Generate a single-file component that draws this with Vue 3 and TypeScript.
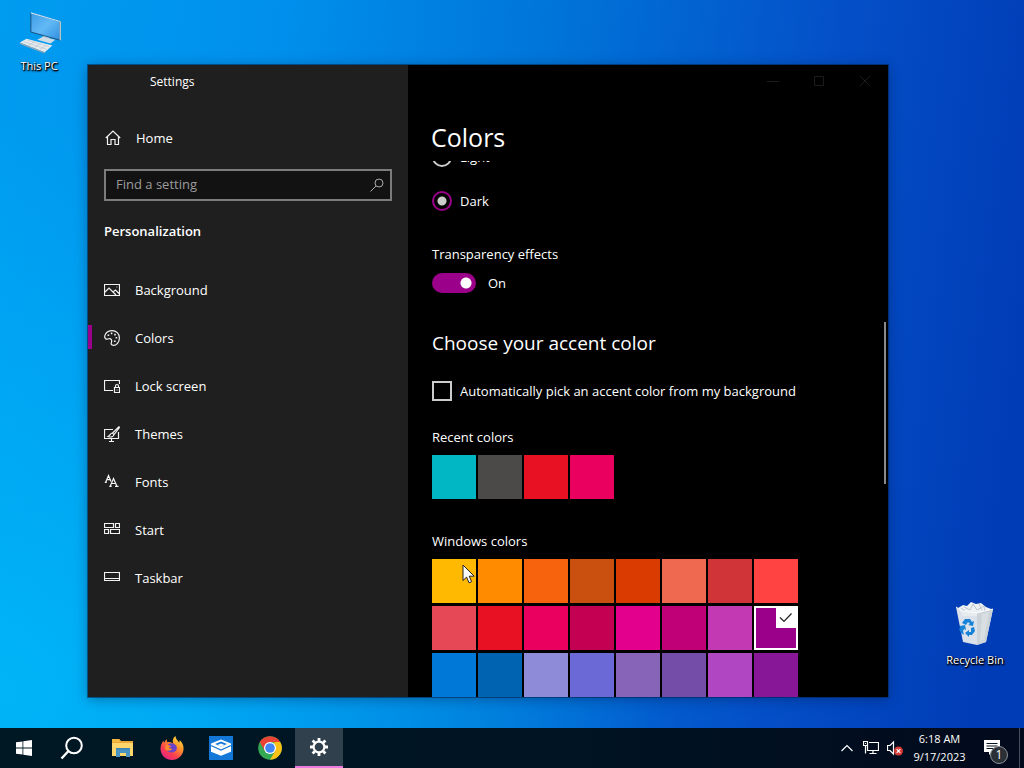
<script setup lang="ts">
import { ref } from 'vue'

interface NavItem { label: string; icon: string; dots?: string }

const navItems: NavItem[] = [
  { label: 'Background', icon: 'M.5 2.500h15v11H.5zM1 10l4-4 7 7M9.500 9.500 11.500 8l4 4M12.500 5h.8' },
  {
    label: 'Colors',
    icon: 'M1.600 8.700C-.5 7 1.500.6 8 .6c4.300 0 7.400 3 7.400 7.300 0 4.500-3 7.500-5.900 7.500-2.600 0-2.600-1.700-2-3.400C8.200 10 6.800 8 5 8.700 3.800 9.200 2.800 9.700 1.600 8.700z',
    dots: 'M3.600 5.200h1.600M6.800 3.400h1.600M10.200 4.600h1.600M11.600 7.800h1.600M10 11.200h1.600',
  },
  { label: 'Lock screen', icon: 'M9 12.500H.5v-10h15V6M4 12.500h5M10.500 9.500h5v5h-5zM11.500 9.500V8a1.500 1.500 0 0 1 3 0v1.500M12.500 12h1' },
  { label: 'Themes', icon: 'M9 3.500H.5v9h14V6M5 15.500h5M7.500 12.500v3M15 .8 8.500 7l1.500 1.500L15.500 1.500zM8.500 7C6 7 6.500 9.500 4 10.500c2.500 1 5.500.5 6-2' },
  { label: 'Fonts', icon: 'M1.800 8 4.500 1.500 7 7.500M2.800 5.700H6M.8 8.300h2M6.300 12 9.500 4.500 12.800 12M7.500 9.500h4.200M5.300 12.400h2.400M11 12.400h3.500' },
  { label: 'Start', icon: 'M.5 1.500h9v4h-9zM11.500 1.500h4v4h-4zM.5 7.500h4v4h-4zM6.500 7.500h9v4h-9z' },
  { label: 'Taskbar', icon: 'M.5 2.500h15v8H.5zM.5 8.500h15' },
]

const recentColors = ['#00b7c3', '#4c4a48', '#e81123', '#ea005e']
const windowsColors = [
  '#ffb900', '#ff8c00', '#f7630c', '#ca5010', '#da3b01', '#ef6950', '#d13438', '#ff4343',
  '#e74856', '#e81123', '#ea005e', '#c30052', '#e3008c', '#bf0077', '#c239b3', '#9a0089',
  '#0078d7', '#0063b1', '#8e8cd8', '#6b69d6', '#8764b8', '#744da9', '#b146c2', '#881798',
]

const activeNav = ref('Colors')
const mode = ref('dark')
const transparency = ref(true)
const autoPick = ref(false)
const accent = ref('#9a0089')
const query = ref('')
</script>

<template>
  <div class="screen">
    <main class="desktop">
      <button class="shortcut pc">
        <svg width="48" height="44" viewBox="0 0 48 46" aria-hidden="true">
          <defs>
            <linearGradient id="glass" x1="0" y1="0" x2="1" y2="1">
              <stop offset="0" stop-color="#3d9be6" /><stop offset=".5" stop-color="#62b9f5" /><stop offset="1" stop-color="#2f8fe0" />
            </linearGradient>
          </defs>
          <path d="M15.500 2 46 11v19.500L15.500 22z" fill="url(#glass)" stroke="#1b4f7c" stroke-width="1" />
          <path d="M15.500 2 46 11" stroke="#bfe2f8" stroke-width="1.200" />
          <path d="M46.200 11v19.500" stroke="#e0dccb" stroke-width="1.200" />
          <path d="m28 26 7 2v3l-7-2z" fill="#aebcc6" />
          <path d="m22 30 6-3 13 3-5 4z" fill="#cfdbe5" />
          <path d="M4 33 11 29l27 7-8 7z" fill="#e6ebef" />
          <path d="m4 33 26 10v1.500L4 34.500z" fill="#98a8b5" />
          <path d="m8 32 24 8M12 30.500l23 7M13 36l7-4M19 38l7-4M25 40l7-4" stroke="#b4bec7" stroke-width=".6" />
        </svg>
        <span>This PC</span>
      </button>

      <button class="shortcut bin">
        <svg width="48" height="48" viewBox="0 0 48 48" aria-hidden="true">
          <path d="m7 9 5-3 4 1 4-4 5 2 5-1 5 4 5 2-2 7H12z" fill="#edf1f4" />
          <path d="m13 8 6 3 3-6 4 6 7-4 1 6M10 9l5 4M28 5l3 6" stroke="#bcc5ce" fill="none" />
          <path d="m5 8 6 4 15 2 16-4-7 33-9 3-14-3z" fill="#e6eaed" opacity=".95" />
          <path d="m26 14 16-4-7 33-9 3z" fill="#cbd2d8" />
          <path d="m31 15 7-2-5 28-4 1z" fill="#d9dee2" />
          <path d="m5 8 6 4 15 2 16-4" stroke="#f8fafc" fill="none" />
          <g fill="#1683d8">
            <path d="m11 24 3-4h5l2 3 2-1-1 5-5-1 2-1-2-2-2 3z" />
            <path d="m20 29 3-1 1 4-3 4h-3v2l-4-4 4-3v2h2z" />
            <path d="m9 27 5-1 1 5-2-1-1 2 1 4-3-2-2-4 1-1z" />
          </g>
        </svg>
        <span>Recycle Bin</span>
      </button>

      <section class="window" aria-label="Settings">
        <aside class="side">
          <header class="title">Settings</header>
          <button class="nav home">
            <svg viewBox="0 0 16 16" aria-hidden="true"><path d="M.8 8 8 1l7.200 7M2.500 6.500v8H6V9.500h4v5h3.500v-8" /></svg>
            Home
          </button>
          <div class="search">
            <input v-model="query" type="text" placeholder="Find a setting" aria-label="Find a setting" />
            <svg viewBox="0 0 16 16" aria-hidden="true"><circle cx="10" cy="6" r="4" /><path d="m7 9-5.500 5.500" /></svg>
          </div>
          <h2>Personalization</h2>
          <nav>
            <button v-for="item in navItems" :key="item.label" class="nav" :class="{ active: item.label === activeNav }" @click="activeNav = item.label">
              <svg viewBox="0 0 16 16" aria-hidden="true">
                <path :d="item.icon" />
                <path v-if="item.dots" class="dots" :d="item.dots" />
              </svg>
              {{ item.label }}
            </button>
          </nav>
        </aside>

        <div class="content">
          <div class="caption">
            <button aria-label="Minimize"><svg viewBox="0 0 12 12"><path d="M0 6.500h12" /></svg></button>
            <button aria-label="Maximize"><svg viewBox="0 0 12 12"><path d="M1.500 1.500h9v9h-9z" /></svg></button>
            <button aria-label="Close"><svg viewBox="0 0 12 12"><path d="m1 1 10 10M11 1 1 11" /></svg></button>
          </div>
          <h1>Colors</h1>
          <div class="scroller">
            <div class="page">
              <label class="option"><input v-model="mode" type="radio" name="mode" value="light" />Light</label>
              <label class="option dark"><input v-model="mode" type="radio" name="mode" value="dark" />Dark</label>
              <label class="caption-text" for="transparency">Transparency effects</label>
              <div class="toggle">
                <input id="transparency" v-model="transparency" type="checkbox" role="switch" />
                <span>{{ transparency ? 'On' : 'Off' }}</span>
              </div>
              <h3>Choose your accent color</h3>
              <label class="option auto"><input v-model="autoPick" type="checkbox" />Automatically pick an accent color from my background</label>
              <h4>Recent colors</h4>
              <div class="swatches recent">
                <button v-for="c in recentColors" :key="c" :style="{ background: c }" :aria-label="c" @click="accent = c"></button>
              </div>
              <h4>Windows colors</h4>
              <div class="swatches">
                <button v-for="c in windowsColors" :key="c" :class="{ picked: c === accent }" :style="{ background: c }" :aria-label="c" :aria-pressed="c === accent" @click="accent = c">
                  <svg v-if="c === accent" viewBox="0 0 20 20" aria-hidden="true"><path d="m4 9.500 4 4 7.500-8" /></svg>
                </button>
              </div>
            </div>
          </div>
          <div class="thumb"></div>
        </div>
      </section>

      <svg class="pointer" width="13" height="20" viewBox="0 0 13 20" aria-hidden="true">
        <path d="M1 1v15.500l3.600-3.400L7 18.800l2.600-1.100-2.400-5.500h5z" fill="#fff" stroke="#222" />
      </svg>
    </main>

    <footer class="taskbar">
      <div class="apps">
        <div class="system">
          <button aria-label="Start">
            <svg width="16" height="16" viewBox="0 0 16 16"><path d="M0 2.300 6.500 1.400v6.200H0zM7.300 1.300 16 0v7.600H7.300zM0 8.400h6.500v6.200L0 13.700zM7.300 8.400H16V16l-8.700-1.300z" fill="#fff" /></svg>
          </button>
          <button aria-label="Search">
            <svg width="24" height="24" viewBox="0 0 24 24" fill="none" stroke="#fff" stroke-width="2"><circle cx="14" cy="9.500" r="7.800" /><path d="m8.500 15-7 7.500" stroke-width="2.400" /></svg>
          </button>
        </div>
        <div class="pinned">
          <button aria-label="File Explorer">
            <svg width="24" height="24" viewBox="0 0 24 24">
              <path d="M1 3h7l2 2h12v14H1z" fill="#e9a93a" /><path d="M1 7h21v13H1z" fill="#ffd66c" />
              <path d="M1 3h7l1.500 1.500L8 6H1z" fill="#f5b942" />
              <path d="M5 12h14v9h-4v-4H9v4H5z" fill="#4a94c4" /><path d="M5 12h14v1.500H5z" fill="#3a84b5" />
            </svg>
          </button>
          <button aria-label="Firefox">
            <svg width="24" height="24" viewBox="0 0 24 24">
              <defs><linearGradient id="fox" x1=".9" y1="0" x2=".2" y2="1"><stop offset="0" stop-color="#fff14a" /><stop offset=".35" stop-color="#ff9a2a" /><stop offset=".7" stop-color="#fa3d50" /><stop offset="1" stop-color="#e3218c" /></linearGradient></defs>
              <path d="M15.500 0c.2 3.500 3.200 4.800 3.600 7l.6-2.800C22 6 24 10 23.500 13.500 23 19.500 18 24 12 24S.7 19.500.5 13C.4 9.500 2 6.500 3.500 4.500L4 7l2.500-4 .7 3.200C10 5.500 12 6.500 13.500 8 12 5 13 1.500 15.500 0z" fill="url(#fox)" />
              <path d="M8 8.500c2.500-2 6.500-1.500 8.300 1.500 1.700 3.500-.8 6.500-4.700 6.500-2.500 0-4.500-1-5.300-3 2 1.300 4.300 1 6-.5-1.500-.2-2.800-.7-3.600-1.500 1-.4 2.100-1 2.600-1.700-1.200-.4-2.600.3-3.300-1.300z" fill="#6a43c9" />
              <path d="M7 8.200c-1.500 1-2.200 3-1.700 5.200 2 1.800 4.700 1.600 6.700-.2l-3.500-1.500 2.600-1.700c-1.500-.2-3-.2-4.100-1.800z" fill="#ff8a2c" />
            </svg>
          </button>
          <button aria-label="Package">
            <svg width="24" height="24" viewBox="0 0 24 24">
              <path d="M0 0h24v24H0z" fill="#1378d8" /><path d="m2 7.500 10-4 10 4v8.300l-10 4-10-4z" fill="#fff" />
              <path d="m2 9.500 10 4.500 10-4.500" stroke="#1378d8" fill="none" stroke-width="1.200" />
              <path d="m6 8 6-2.400L18 8l-6 2.500z" fill="#1378d8" /><path d="m8.500 9 3.500-1.400L15.500 9 12 10.500z" fill="#fff" />
            </svg>
          </button>
          <button aria-label="Chrome">
            <svg width="24" height="24" viewBox="0 0 24 24">
              <circle cx="12" cy="12" r="11.800" fill="#34a853" />
              <path d="M1.800 6.100A11.800 11.800 0 0 1 22.200 6H12l-5.200 9z" fill="#ea4335" />
              <path d="M22.200 6A11.800 11.800 0 0 1 12 23.800L17.200 15 16 6z" fill="#fbc116" />
              <circle cx="12" cy="12" r="6" fill="#fff" /><circle cx="12" cy="12" r="4.800" fill="#4285f4" />
            </svg>
          </button>
          <button class="running" aria-label="Settings">
            <svg width="18" height="18" viewBox="-9 -9 18 18">
              <circle r="5.400" fill="none" stroke="#fff" stroke-width="2.200" />
              <path d="M0-9v3M0 6v3M-9 0h3M6 0h3M-6.400-6.400l2.200 2.200M4.200 4.200l2.200 2.200M-6.400 6.400l2.200-2.200M4.200-4.200l2.200-2.200" stroke="#fff" stroke-width="2.800" />
            </svg>
          </button>
        </div>
      </div>
      <div class="tray">
        <button aria-label="Show hidden icons"><svg width="12" height="8" viewBox="0 0 12 8"><path d="m.5 7 5.500-5.500L11.500 7" /></svg></button>
        <button aria-label="Network"><svg width="16" height="16" viewBox="0 0 16 16"><path d="M6 2.500h9.500v8H4.500V6M.5 1.500h4v4h-4zM2.500 5.500v8M10 10.500v3M6.500 13.500h7M2 3.500h1" /></svg></button>
        <button aria-label="Volume muted"><svg width="16" height="16" viewBox="0 0 16 16"><path d="M.5 5.500h2.500L6.500 2v12L3 10.500H.5z" /><circle cx="11.500" cy="11" r="4.500" fill="#d93a35" stroke="none" /><path d="m9.700 9.200 3.600 3.600M13.300 9.200l-3.600 3.600" /></svg></button>
        <time datetime="2023-09-17T06:18"><span>6:18 AM</span><span>9/17/2023</span></time>
        <button class="notes" aria-label="Notifications">
          <svg width="18" height="18" viewBox="0 0 18 18"><path d="M1 1h16v12H9l-3 3v-3H1z" fill="#fff" stroke="none" /><path d="M3.500 4.500h11M3.500 7h11M3.500 9.500h8" stroke="#061321" /></svg>
          <span class="badge">1</span>
        </button>
      </div>
    </footer>
  </div>
</template>

<style>
body { margin: 0; }
</style>

<style scoped>
.screen {
  height: 100vh;
  display: flex;
  flex-direction: column;
  overflow: hidden;
  color: #fff;
  font: 13px/20px "Open Sans", "Noto Sans", sans-serif;
  background:
    radial-gradient(ellipse 65% 75% at 0% 90%, rgba(0, 190, 250, .75), transparent),
    linear-gradient(97deg, #009cf0 0%, #0090ec 25%, #0074d8 50%, #0450c8 75%, #003cb6 95%);
}
* { box-sizing: border-box; }
button { font: inherit; color: inherit; background: none; border: 0; padding: 0; margin: 0; }
h1, h2, h3, h4 { margin: 0; font-weight: 400; }
input { margin: 0; font: inherit; appearance: none; flex: none; }
svg { display: block; flex: none; }
.desktop { flex: 1; position: relative; min-height: 0; }
.shortcut {
  position: absolute;
  width: 78px;
  display: flex;
  flex-direction: column;
  align-items: center;
  font-size: 11px;
  line-height: 16px;
  text-shadow: 0 1px 2px #000, 1px 1px 2px #000, 1px 1px 1px #000;
}
.pc { left: 0; top: 11px; }
.pc span { margin-top: 3px; }
.bin { right: 10px; bottom: 60px; }
.bin span { margin-top: 5px; }

.window {
  position: absolute;
  inset: 65px 136px 31px 88px;
  display: flex;
  background: #000;
  box-shadow: 0 0 0 1px rgba(0, 35, 75, .55), 0 2px 12px rgba(0, 20, 60, .4);
}
.side { width: 320px; flex: none; background: #1f1f1f; overflow: hidden; }
.title { height: 49px; padding: 7px 0 0 62px; font-size: 12px; }
.nav {
  width: 100%;
  height: 48px;
  display: flex;
  align-items: center;
  gap: 15px;
  padding-left: 16px;
  text-align: left;
  position: relative;
}
.nav svg { width: 16px; height: 16px; fill: none; stroke: #f2f2f2; stroke-width: 1.2; }
.nav .dots { stroke-width: 1.6; }
.home { padding-left: 17px; }
.nav.active::before { content: ""; position: absolute; left: 0; top: 11px; width: 4px; height: 24px; background: #9a0089; }
.search {
  margin: 7px 16px 0;
  height: 32px;
  display: flex;
  align-items: center;
  border: 2px solid #7c7c7c;
  background: #121212;
  padding: 0 5px 0 10px;
}
.search input { flex: 1; min-width: 0; height: 20px; border: 0; outline: 0; padding: 0 0 2px; background: none; color: #fff; }
.search input::placeholder { color: #9c9c9c; opacity: 1; }
.search svg { width: 16px; height: 16px; fill: none; stroke: #a8a8a8; }
h2 { padding: 20px 16px 25px; font-size: 13px; line-height: 20px; font-weight: 600; }

.content { flex: 1; min-width: 0; position: relative; display: flex; flex-direction: column; }
.caption { height: 32px; display: flex; justify-content: flex-end; }
.caption button { width: 46px; display: grid; place-items: center; }
.caption svg { width: 12px; height: 12px; fill: none; stroke: #1c1c1c; }
h1 { height: 64px; padding: 22px 0 0 23px; font-size: 25px; line-height: 36px; }
.scroller { flex: 1; min-height: 0; overflow: hidden; }
.page { margin-top: -14px; padding: 0 24px; display: flex; flex-direction: column; align-items: flex-start; }
.option { display: flex; align-items: center; gap: 8px; height: 20px; }
.option input { width: 20px; height: 20px; border: 2px solid #ccc; }
.option input[type="radio"] { border-radius: 50%; }
.option input[type="radio"]:checked { border-color: #9a0089; background: radial-gradient(circle, #ccc 4px, transparent 5px); }
.option input[type="checkbox"]:checked { background: #9a0089; }
.dark { margin-top: 24px; }
.caption-text { margin-top: 33px; }
.toggle { display: flex; align-items: center; gap: 12px; margin-top: 9px; }
.toggle input { width: 44px; height: 20px; border-radius: 10px; background: radial-gradient(circle at 34px 10px, #fff 5px, transparent 6px) #9a0089; }
.toggle input:not(:checked) { background: radial-gradient(circle at 10px 10px, #ccc 5px, transparent 6px) #333; }
h3 { margin-top: 36px; font-size: 19px; line-height: 28px; }
.auto { margin-top: 24px; }
h4 { margin-top: 26px; font-size: 13px; line-height: 20px; }
.swatches { margin-top: 8px; display: grid; grid-template-columns: repeat(8, 44px); gap: 3px 2px; }
.swatches button { height: 44px; }
.recent { margin-bottom: 6px; }
.swatches .picked { border: 2px solid #fff; display: flex; justify-content: flex-end; align-items: flex-start; }
.picked svg { width: 20px; height: 20px; background: #fff; fill: none; stroke: #222; stroke-width: 1.2; }
.thumb { position: absolute; right: 2px; top: 257px; width: 2px; height: 162px; background: #8a8a8a; }
.pointer { position: absolute; left: 462px; top: 564px; }

.taskbar { height: 40px; flex: none; display: flex; justify-content: space-between; background: linear-gradient(90deg, #001824, #001322 60%, #020a1c); }
.apps { display: flex; gap: 3px; }
.system { display: flex; }
.pinned { display: flex; gap: 1px; }
.apps button { width: 48px; display: grid; place-items: center; }
.apps .running { background: #30414d; border-bottom: 2px solid #ee7be0; }
.tray { display: flex; align-items: center; padding-right: 4px; }
.tray button { width: 24px; height: 40px; display: grid; place-items: center; }
.tray svg { fill: none; stroke: #fff; stroke-width: 1.2; }
.tray time { width: 65px; display: flex; flex-direction: column; align-items: center; font-size: 11px; line-height: 18px; }
.tray .notes { width: 48px; position: relative; border-right: 1px solid #44505c; }
.notes > svg { margin-right: 8px; }
.badge { position: absolute; left: 18px; top: 18px; width: 18px; height: 18px; border: 1px solid #8b9196; border-radius: 50%; background: #2b3036; font-size: 12px; line-height: 16px; text-align: center; }
</style>
